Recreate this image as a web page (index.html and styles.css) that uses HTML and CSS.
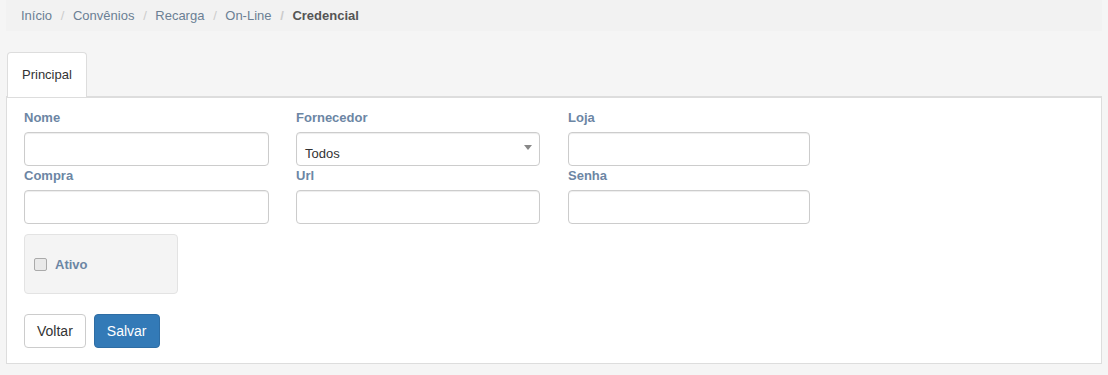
FILE: index.html
```html
<!DOCTYPE html>
<html lang="pt-BR">
<head>
  <meta charset="UTF-8">
  <title>Credencial</title>
  <link rel="stylesheet" href="styles.css">
</head>
<body>

  <ol class="breadcrumb">
    <li><a href="#">Início</a></li>
    <li><a href="#">Convênios</a></li>
    <li><a href="#">Recarga</a></li>
    <li><a href="#">On-Line</a></li>
    <li class="active">Credencial</li>
  </ol>

  <ul class="tabs">
    <li class="tab active">Principal</li>
  </ul>

  <div class="panel">
    <div class="form-grid">
      <div class="field">
        <label for="nome">Nome</label>
        <input type="text" id="nome">
      </div>
      <div class="field">
        <label for="fornecedor">Fornecedor</label>
        <div class="select">
          <span>Todos</span>
          <span class="caret"></span>
        </div>
      </div>
      <div class="field">
        <label for="loja">Loja</label>
        <input type="text" id="loja">
      </div>
      <div class="field">
        <label for="compra">Compra</label>
        <input type="text" id="compra">
      </div>
      <div class="field">
        <label for="url">Url</label>
        <input type="text" id="url">
      </div>
      <div class="field">
        <label for="senha">Senha</label>
        <input type="password" id="senha">
      </div>
    </div>

    <div class="check-box">
      <span class="box"></span>
      <span class="check-label">Ativo</span>
    </div>

    <div class="actions">
      <button class="btn">Voltar</button>
      <button class="btn btn-primary">Salvar</button>
    </div>
  </div>

</body>
</html>
```

FILE: styles.css
```css
body {
  font-family: "Liberation Sans", Arial, sans-serif;
  font-size: 13px;
  background: #f5f5f5;
  margin: 0;
  padding: 0 6px;
  color: #333;
}
.breadcrumb {
  list-style: none;
  margin: 0;
  padding: 6px 15px;
  height: 19px;
  line-height: 19px;
  background: #f2f2f2;
  display: flex;
}
.breadcrumb li + li::before {
  content: "/";
  color: #ccc;
  padding: 0 8.5px 0 8.75px;
}
.breadcrumb a {
  color: #6b7f94;
  text-decoration: none;
}
.breadcrumb .active {
  color: #555;
  font-weight: bold;
}
.tabs {
  list-style: none;
  margin: 21px 0 0;
  padding: 0;
  display: flex;
}
.tab {
  margin-left: 1px;
  padding: 12px 14px 13px;
  line-height: 19px;
  background: #fff;
  border: 1px solid #ddd;
  border-bottom: none;
  border-radius: 4px 4px 0 0;
  color: #333;
}
.panel {
  background: #fff;
  border: 1px solid #ddd;
  border-top: 2px solid #ddd;
  margin-top: -1px;
  padding: 10px 17px 15px;
  height: 240px;
}
.form-grid {
  display: grid;
  grid-template-columns: 245px 244px 243px;
  column-gap: 27px;
}
.field:nth-child(3n) {
  margin-left: 1px;
}
.field label {
  display: block;
  font-weight: bold;
  color: #6c86a4;
  line-height: 20px;
  margin-bottom: 4px;
}
.field input,
.select {
  box-sizing: border-box;
  width: 100%;
  height: 34px;
  border: 1px solid #ccc;
  border-radius: 4px;
  background: #fff;
  box-shadow: inset 0 1px 1px rgba(0,0,0,0.075);
  margin: 0;
  font-family: inherit;
  font-size: 13px;
}
.select {
  position: relative;
  padding: 12px 8px 0;
  line-height: 18px;
  color: #333;
}
.caret {
  position: absolute;
  right: 7px;
  top: 12px;
  border-left: 4px solid transparent;
  border-right: 4px solid transparent;
  border-top: 5px solid #888;
}
.check-box {
  box-sizing: border-box;
  width: 154px;
  height: 60px;
  margin-top: 10px;
  background: #f4f4f4;
  border: 1px solid #e3e3e3;
  border-radius: 4px;
  display: flex;
  align-items: center;
  padding: 0 9px;
}
.box {
  width: 11px;
  height: 11px;
  border: 1px solid #aaa;
  border-radius: 2px;
  background: #e9e9e9;
}
.check-label {
  margin-left: 8px;
  font-weight: bold;
  color: #6c86a4;
}
.actions {
  margin-top: 20px;
  display: flex;
  gap: 8px;
}
.btn {
  height: 34px;
  padding: 0 12px;
  font-family: inherit;
  font-size: 14px;
  color: #333;
  background: #fff;
  border: 1px solid #ccc;
  border-radius: 4px;
  cursor: pointer;
}
.btn-primary {
  color: #fff;
  background: #337ab7;
  border-color: #2e6da4;
  padding: 0 12px;
}
```
